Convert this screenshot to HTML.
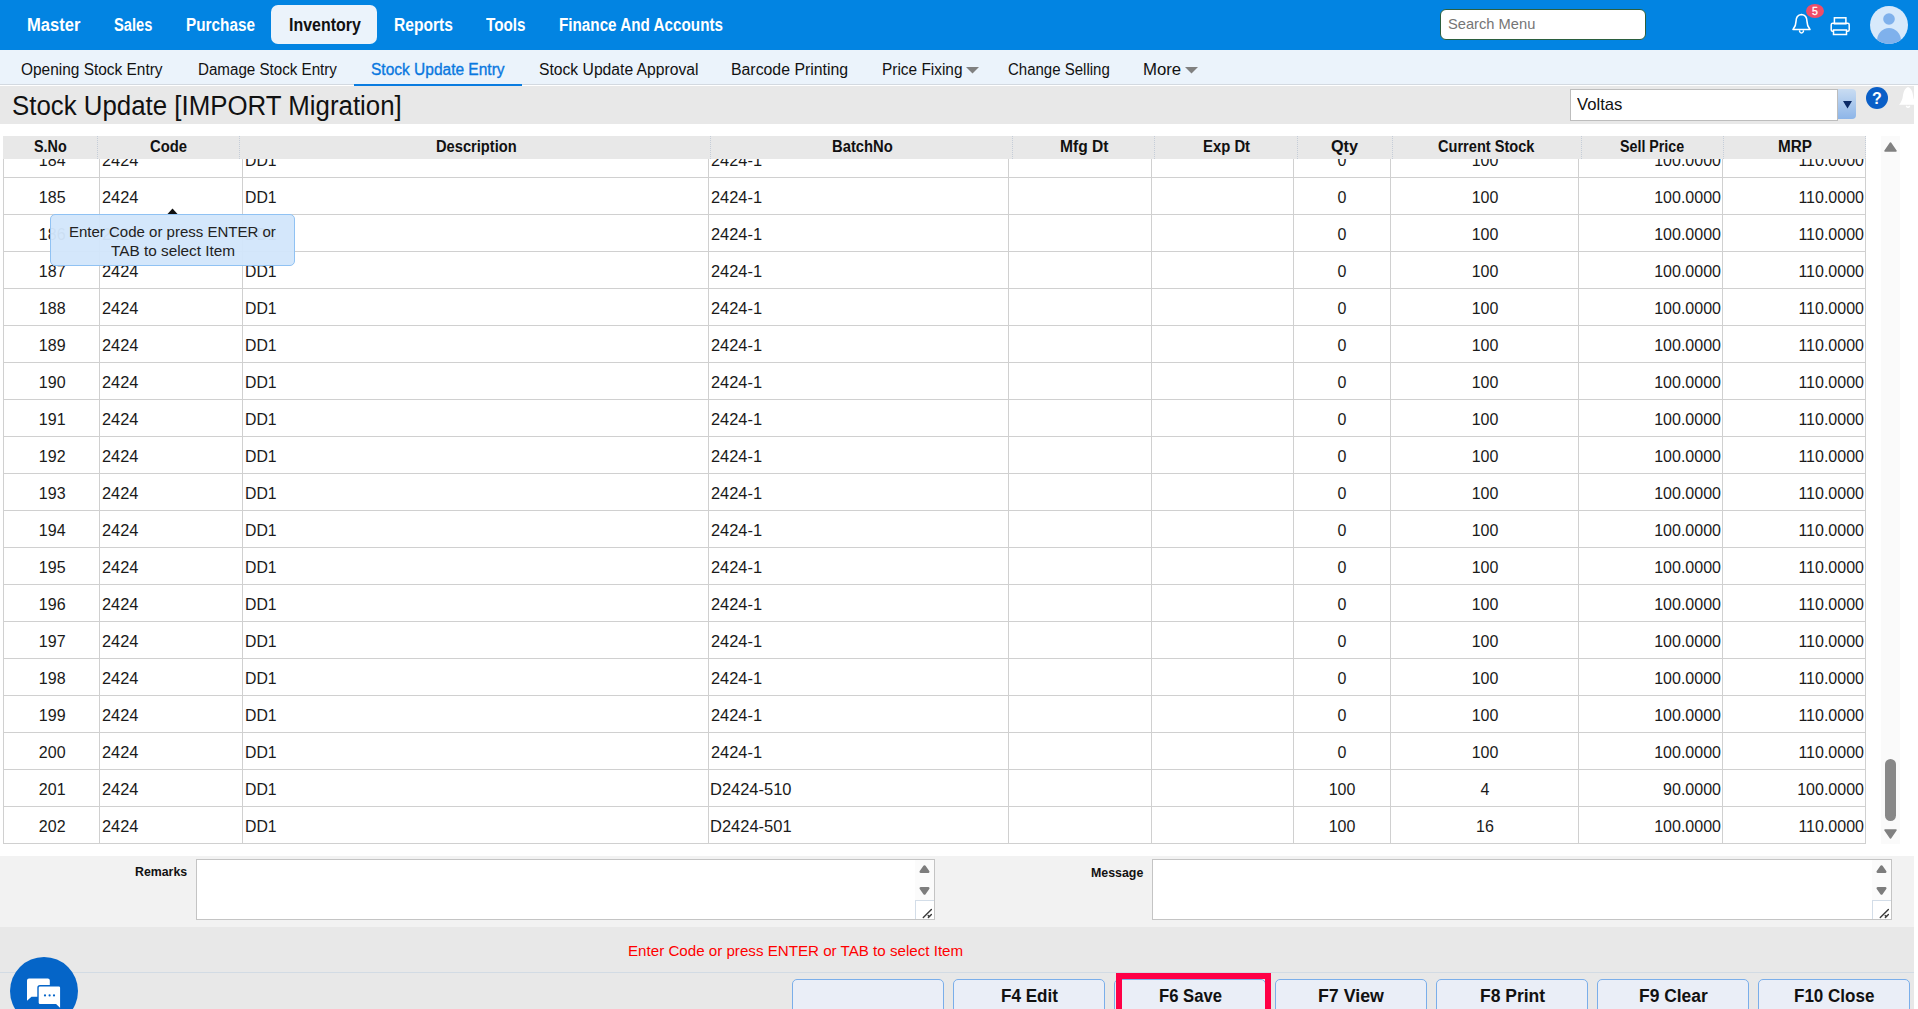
<!DOCTYPE html><html><head><meta charset="utf-8"><style>
*{box-sizing:border-box;margin:0;padding:0}
html,body{width:1918px;height:1009px;overflow:hidden;background:#fff;font-family:"Liberation Sans",sans-serif}
.t{position:absolute;white-space:nowrap;line-height:1;transform-origin:0 50%}
.a{position:absolute}
</style></head><body><div class="a" style="left:0;top:0;width:1918px;height:50px;background:#0284e2"></div>
<div class="a" style="left:271px;top:5px;width:106px;height:39px;background:#ebf3fb;border-radius:7px"></div>
<div class="t" style="left:27.46px;top:16.06px;font-size:18px;font-weight:bold;color:#fff;transform:scaleX(0.9202);">Master</div>
<div class="t" style="left:114.15px;top:16.06px;font-size:18px;font-weight:bold;color:#fff;transform:scaleX(0.8162);">Sales</div>
<div class="t" style="left:186.27px;top:16.06px;font-size:18px;font-weight:bold;color:#fff;transform:scaleX(0.8514);">Purchase</div>
<div class="t" style="left:288.86px;top:16.06px;font-size:18px;font-weight:bold;color:#111;transform:scaleX(0.8858);">Inventory</div>
<div class="t" style="left:394.46px;top:16.06px;font-size:18px;font-weight:bold;color:#fff;transform:scaleX(0.8674);">Reports</div>
<div class="t" style="left:485.97px;top:16.06px;font-size:18px;font-weight:bold;color:#fff;transform:scaleX(0.8485);">Tools</div>
<div class="t" style="left:559.07px;top:16.06px;font-size:18px;font-weight:bold;color:#fff;transform:scaleX(0.8468);">Finance And Accounts</div>
<div class="a" style="left:1440px;top:9px;width:206px;height:31px;background:#fff;border:1px solid #2b5f3e;border-radius:6px"></div>
<div class="t" style="left:1447.62px;top:16.30px;font-size:15px;font-weight:normal;color:#757575;transform:scaleX(0.9788);">Search Menu</div>
<svg class="a" style="left:1788px;top:10px" width="28" height="28" viewBox="0 0 28 28">
<path d="M5 19.5 Q8 16 8 11.5 Q8 5 13.5 4.5 Q19 5 19 11.5 Q19 16 22 19.5 Z" fill="none" stroke="#fff" stroke-width="1.6" stroke-linejoin="round"/>
<path d="M11.6 20.3 L11.6 21.6 Q13.5 24.3 15.4 21.6 L15.4 20.3" fill="none" stroke="#fff" stroke-width="1.4"/>
</svg>
<div class="a" style="left:1806px;top:4px;width:18px;height:14px;border-radius:50%;background:#ef4d68"></div>
<div class="t" style="left:1812.08px;top:6.41px;font-size:10.5px;font-weight:normal;color:#fff;-webkit-text-stroke:0.3px #fff;">5</div>
<svg class="a" style="left:1830px;top:16px" width="21" height="20" viewBox="0 0 21 20">
<rect x="4.4" y="1.8" width="11.5" height="6" fill="none" stroke="#fff" stroke-width="1.5"/>
<rect x="1.2" y="7.2" width="18" height="8" rx="1.5" fill="none" stroke="#fff" stroke-width="1.5"/>
<rect x="3.5" y="14" width="13" height="4.5" fill="#0284e2" stroke="#fff" stroke-width="1.5"/>
</svg>
<svg class="a" style="left:1870px;top:6px" width="38" height="38" viewBox="0 0 38 38">
<defs><clipPath id="av"><circle cx="19" cy="19" r="19"/></clipPath></defs>
<circle cx="19" cy="19" r="19" fill="#d7e9fb"/>
<g clip-path="url(#av)"><circle cx="19" cy="13" r="5.8" fill="#7fb1ec"/>
<ellipse cx="19" cy="35" rx="12" ry="13" fill="#7fb1ec"/></g>
</svg>
<div class="a" style="left:0;top:50px;width:1918px;height:35px;background:#ebf3fb;border-bottom:1px solid #d3d9e0"></div>
<div class="t" style="left:21.41px;top:61.76px;font-size:16px;font-weight:normal;color:#111;transform:scaleX(0.9648);">Opening Stock Entry</div>
<div class="t" style="left:197.85px;top:61.76px;font-size:16px;font-weight:normal;color:#111;transform:scaleX(0.9468);">Damage Stock Entry</div>
<div class="t" style="left:371.21px;top:61.76px;font-size:16px;font-weight:normal;color:#0a78df;transform:scaleX(0.9689);-webkit-text-stroke:0.35px #0a78df;">Stock Update Entry</div>
<div class="t" style="left:538.71px;top:61.76px;font-size:16px;font-weight:normal;color:#111;transform:scaleX(0.9799);">Stock Update Approval</div>
<div class="t" style="left:731.35px;top:61.76px;font-size:16px;font-weight:normal;color:#111;transform:scaleX(0.9898);">Barcode Printing</div>
<div class="t" style="left:881.85px;top:61.76px;font-size:16px;font-weight:normal;color:#111;transform:scaleX(0.9630);">Price Fixing</div>
<div class="t" style="left:1008.21px;top:61.76px;font-size:16px;font-weight:normal;color:#111;transform:scaleX(0.9376);">Change Selling</div>
<div class="t" style="left:1142.84px;top:61.76px;font-size:16px;font-weight:normal;color:#111;transform:scaleX(1.0479);">More</div>
<div class="a" style="left:354px;top:84px;width:168px;height:2px;background:#0a7ce0"></div>
<svg class="a" style="left:966px;top:67px" width="13" height="7" viewBox="0 0 13 7"><path d="M0 0 L13 0 L6.5 6.5 Z" fill="#808080"/></svg>
<svg class="a" style="left:1185px;top:67px" width="13" height="7" viewBox="0 0 13 7"><path d="M0 0 L13 0 L6.5 6.5 Z" fill="#808080"/></svg>
<div class="a" style="left:0;top:86px;width:1914px;height:38px;background:#e8e8e8"></div>
<div class="t" style="left:11.65px;top:93.14px;font-size:27px;font-weight:normal;color:#111;transform:scaleX(0.9573);">Stock Update [IMPORT Migration]</div>
<div class="a" style="left:1570px;top:89px;width:268px;height:32px;background:#fff;border:1px solid #bdbdbd"></div>
<div class="t" style="left:1576.78px;top:95.61px;font-size:17px;font-weight:normal;color:#111;transform:scaleX(0.9796);">Voltas</div>
<div class="a" style="left:1838px;top:89px;width:18px;height:30px;background:linear-gradient(#c9dcf2,#8db5e8);border-radius:0 4px 4px 0"></div>
<svg class="a" style="left:1842.5px;top:101px" width="9" height="8" viewBox="0 0 9 8"><path d="M0 0 L9 0 L4.5 7.5 Z" fill="#0b2a66"/></svg>
<div class="a" style="left:1866px;top:87px;width:22px;height:22px;border-radius:50%;background:#0a5fc7"></div>
<div class="t" style="left:1872.11px;top:90.96px;font-size:16px;font-weight:bold;color:#fff;">?</div>
<svg class="a" style="left:1896px;top:85px" width="22" height="25" viewBox="0 0 22 25">
<path d="M3 19.8 Q6.5 16 7 10 Q8 3.5 12 2 Q16 3.5 17 10 Q17.5 16 21 19.8 Z" fill="#fff"/><path d="M10.2 21 Q12 23.5 13.8 21" fill="none" stroke="#fff" stroke-width="1.3"/></svg>
<div class="a" style="left:0;top:159px;width:1918px;height:685px;overflow:hidden">
<div class="t" style="left:38.84px;top:-5.54px;font-size:16px;font-weight:normal;color:#1a1a1a;">184</div><div class="t" style="left:101.90px;top:-5.54px;font-size:16px;font-weight:normal;color:#1a1a1a;transform:scaleX(1.0240);">2424</div><div class="t" style="left:245.25px;top:-5.54px;font-size:16px;font-weight:normal;color:#1a1a1a;transform:scaleX(0.9873);">DD1</div><div class="t" style="left:710.50px;top:-5.54px;font-size:16px;font-weight:normal;color:#1a1a1a;transform:scaleX(1.0244);">2424-1</div><div class="t" style="left:1337.55px;top:-5.54px;font-size:16px;font-weight:normal;color:#1a1a1a;">0</div><div class="t" style="left:1471.64px;top:-5.54px;font-size:16px;font-weight:normal;color:#1a1a1a;">100</div><div class="t" style="left:1654.20px;top:-5.54px;font-size:16px;font-weight:normal;color:#1a1a1a;">100.0000</div><div class="t" style="left:1798.39px;top:-5.54px;font-size:16px;font-weight:normal;color:#1a1a1a;">110.0000</div><div class="t" style="left:38.84px;top:31.46px;font-size:16px;font-weight:normal;color:#1a1a1a;">185</div><div class="t" style="left:101.90px;top:31.46px;font-size:16px;font-weight:normal;color:#1a1a1a;transform:scaleX(1.0240);">2424</div><div class="t" style="left:245.25px;top:31.46px;font-size:16px;font-weight:normal;color:#1a1a1a;transform:scaleX(0.9873);">DD1</div><div class="t" style="left:710.50px;top:31.46px;font-size:16px;font-weight:normal;color:#1a1a1a;transform:scaleX(1.0244);">2424-1</div><div class="t" style="left:1337.55px;top:31.46px;font-size:16px;font-weight:normal;color:#1a1a1a;">0</div><div class="t" style="left:1471.64px;top:31.46px;font-size:16px;font-weight:normal;color:#1a1a1a;">100</div><div class="t" style="left:1654.20px;top:31.46px;font-size:16px;font-weight:normal;color:#1a1a1a;">100.0000</div><div class="t" style="left:1798.39px;top:31.46px;font-size:16px;font-weight:normal;color:#1a1a1a;">110.0000</div><div class="t" style="left:38.84px;top:68.46px;font-size:16px;font-weight:normal;color:#1a1a1a;">186</div><div class="t" style="left:101.90px;top:68.46px;font-size:16px;font-weight:normal;color:#1a1a1a;transform:scaleX(1.0240);">2424</div><div class="t" style="left:245.25px;top:68.46px;font-size:16px;font-weight:normal;color:#1a1a1a;transform:scaleX(0.9873);">DD1</div><div class="t" style="left:710.50px;top:68.46px;font-size:16px;font-weight:normal;color:#1a1a1a;transform:scaleX(1.0244);">2424-1</div><div class="t" style="left:1337.55px;top:68.46px;font-size:16px;font-weight:normal;color:#1a1a1a;">0</div><div class="t" style="left:1471.64px;top:68.46px;font-size:16px;font-weight:normal;color:#1a1a1a;">100</div><div class="t" style="left:1654.20px;top:68.46px;font-size:16px;font-weight:normal;color:#1a1a1a;">100.0000</div><div class="t" style="left:1798.39px;top:68.46px;font-size:16px;font-weight:normal;color:#1a1a1a;">110.0000</div><div class="t" style="left:38.84px;top:105.46px;font-size:16px;font-weight:normal;color:#1a1a1a;">187</div><div class="t" style="left:101.90px;top:105.46px;font-size:16px;font-weight:normal;color:#1a1a1a;transform:scaleX(1.0240);">2424</div><div class="t" style="left:245.25px;top:105.46px;font-size:16px;font-weight:normal;color:#1a1a1a;transform:scaleX(0.9873);">DD1</div><div class="t" style="left:710.50px;top:105.46px;font-size:16px;font-weight:normal;color:#1a1a1a;transform:scaleX(1.0244);">2424-1</div><div class="t" style="left:1337.55px;top:105.46px;font-size:16px;font-weight:normal;color:#1a1a1a;">0</div><div class="t" style="left:1471.64px;top:105.46px;font-size:16px;font-weight:normal;color:#1a1a1a;">100</div><div class="t" style="left:1654.20px;top:105.46px;font-size:16px;font-weight:normal;color:#1a1a1a;">100.0000</div><div class="t" style="left:1798.39px;top:105.46px;font-size:16px;font-weight:normal;color:#1a1a1a;">110.0000</div><div class="t" style="left:38.84px;top:142.46px;font-size:16px;font-weight:normal;color:#1a1a1a;">188</div><div class="t" style="left:101.90px;top:142.46px;font-size:16px;font-weight:normal;color:#1a1a1a;transform:scaleX(1.0240);">2424</div><div class="t" style="left:245.25px;top:142.46px;font-size:16px;font-weight:normal;color:#1a1a1a;transform:scaleX(0.9873);">DD1</div><div class="t" style="left:710.50px;top:142.46px;font-size:16px;font-weight:normal;color:#1a1a1a;transform:scaleX(1.0244);">2424-1</div><div class="t" style="left:1337.55px;top:142.46px;font-size:16px;font-weight:normal;color:#1a1a1a;">0</div><div class="t" style="left:1471.64px;top:142.46px;font-size:16px;font-weight:normal;color:#1a1a1a;">100</div><div class="t" style="left:1654.20px;top:142.46px;font-size:16px;font-weight:normal;color:#1a1a1a;">100.0000</div><div class="t" style="left:1798.39px;top:142.46px;font-size:16px;font-weight:normal;color:#1a1a1a;">110.0000</div><div class="t" style="left:38.84px;top:179.46px;font-size:16px;font-weight:normal;color:#1a1a1a;">189</div><div class="t" style="left:101.90px;top:179.46px;font-size:16px;font-weight:normal;color:#1a1a1a;transform:scaleX(1.0240);">2424</div><div class="t" style="left:245.25px;top:179.46px;font-size:16px;font-weight:normal;color:#1a1a1a;transform:scaleX(0.9873);">DD1</div><div class="t" style="left:710.50px;top:179.46px;font-size:16px;font-weight:normal;color:#1a1a1a;transform:scaleX(1.0244);">2424-1</div><div class="t" style="left:1337.55px;top:179.46px;font-size:16px;font-weight:normal;color:#1a1a1a;">0</div><div class="t" style="left:1471.64px;top:179.46px;font-size:16px;font-weight:normal;color:#1a1a1a;">100</div><div class="t" style="left:1654.20px;top:179.46px;font-size:16px;font-weight:normal;color:#1a1a1a;">100.0000</div><div class="t" style="left:1798.39px;top:179.46px;font-size:16px;font-weight:normal;color:#1a1a1a;">110.0000</div><div class="t" style="left:38.84px;top:216.46px;font-size:16px;font-weight:normal;color:#1a1a1a;">190</div><div class="t" style="left:101.90px;top:216.46px;font-size:16px;font-weight:normal;color:#1a1a1a;transform:scaleX(1.0240);">2424</div><div class="t" style="left:245.25px;top:216.46px;font-size:16px;font-weight:normal;color:#1a1a1a;transform:scaleX(0.9873);">DD1</div><div class="t" style="left:710.50px;top:216.46px;font-size:16px;font-weight:normal;color:#1a1a1a;transform:scaleX(1.0244);">2424-1</div><div class="t" style="left:1337.55px;top:216.46px;font-size:16px;font-weight:normal;color:#1a1a1a;">0</div><div class="t" style="left:1471.64px;top:216.46px;font-size:16px;font-weight:normal;color:#1a1a1a;">100</div><div class="t" style="left:1654.20px;top:216.46px;font-size:16px;font-weight:normal;color:#1a1a1a;">100.0000</div><div class="t" style="left:1798.39px;top:216.46px;font-size:16px;font-weight:normal;color:#1a1a1a;">110.0000</div><div class="t" style="left:38.84px;top:253.46px;font-size:16px;font-weight:normal;color:#1a1a1a;">191</div><div class="t" style="left:101.90px;top:253.46px;font-size:16px;font-weight:normal;color:#1a1a1a;transform:scaleX(1.0240);">2424</div><div class="t" style="left:245.25px;top:253.46px;font-size:16px;font-weight:normal;color:#1a1a1a;transform:scaleX(0.9873);">DD1</div><div class="t" style="left:710.50px;top:253.46px;font-size:16px;font-weight:normal;color:#1a1a1a;transform:scaleX(1.0244);">2424-1</div><div class="t" style="left:1337.55px;top:253.46px;font-size:16px;font-weight:normal;color:#1a1a1a;">0</div><div class="t" style="left:1471.64px;top:253.46px;font-size:16px;font-weight:normal;color:#1a1a1a;">100</div><div class="t" style="left:1654.20px;top:253.46px;font-size:16px;font-weight:normal;color:#1a1a1a;">100.0000</div><div class="t" style="left:1798.39px;top:253.46px;font-size:16px;font-weight:normal;color:#1a1a1a;">110.0000</div><div class="t" style="left:38.84px;top:290.46px;font-size:16px;font-weight:normal;color:#1a1a1a;">192</div><div class="t" style="left:101.90px;top:290.46px;font-size:16px;font-weight:normal;color:#1a1a1a;transform:scaleX(1.0240);">2424</div><div class="t" style="left:245.25px;top:290.46px;font-size:16px;font-weight:normal;color:#1a1a1a;transform:scaleX(0.9873);">DD1</div><div class="t" style="left:710.50px;top:290.46px;font-size:16px;font-weight:normal;color:#1a1a1a;transform:scaleX(1.0244);">2424-1</div><div class="t" style="left:1337.55px;top:290.46px;font-size:16px;font-weight:normal;color:#1a1a1a;">0</div><div class="t" style="left:1471.64px;top:290.46px;font-size:16px;font-weight:normal;color:#1a1a1a;">100</div><div class="t" style="left:1654.20px;top:290.46px;font-size:16px;font-weight:normal;color:#1a1a1a;">100.0000</div><div class="t" style="left:1798.39px;top:290.46px;font-size:16px;font-weight:normal;color:#1a1a1a;">110.0000</div><div class="t" style="left:38.84px;top:327.46px;font-size:16px;font-weight:normal;color:#1a1a1a;">193</div><div class="t" style="left:101.90px;top:327.46px;font-size:16px;font-weight:normal;color:#1a1a1a;transform:scaleX(1.0240);">2424</div><div class="t" style="left:245.25px;top:327.46px;font-size:16px;font-weight:normal;color:#1a1a1a;transform:scaleX(0.9873);">DD1</div><div class="t" style="left:710.50px;top:327.46px;font-size:16px;font-weight:normal;color:#1a1a1a;transform:scaleX(1.0244);">2424-1</div><div class="t" style="left:1337.55px;top:327.46px;font-size:16px;font-weight:normal;color:#1a1a1a;">0</div><div class="t" style="left:1471.64px;top:327.46px;font-size:16px;font-weight:normal;color:#1a1a1a;">100</div><div class="t" style="left:1654.20px;top:327.46px;font-size:16px;font-weight:normal;color:#1a1a1a;">100.0000</div><div class="t" style="left:1798.39px;top:327.46px;font-size:16px;font-weight:normal;color:#1a1a1a;">110.0000</div><div class="t" style="left:38.84px;top:364.46px;font-size:16px;font-weight:normal;color:#1a1a1a;">194</div><div class="t" style="left:101.90px;top:364.46px;font-size:16px;font-weight:normal;color:#1a1a1a;transform:scaleX(1.0240);">2424</div><div class="t" style="left:245.25px;top:364.46px;font-size:16px;font-weight:normal;color:#1a1a1a;transform:scaleX(0.9873);">DD1</div><div class="t" style="left:710.50px;top:364.46px;font-size:16px;font-weight:normal;color:#1a1a1a;transform:scaleX(1.0244);">2424-1</div><div class="t" style="left:1337.55px;top:364.46px;font-size:16px;font-weight:normal;color:#1a1a1a;">0</div><div class="t" style="left:1471.64px;top:364.46px;font-size:16px;font-weight:normal;color:#1a1a1a;">100</div><div class="t" style="left:1654.20px;top:364.46px;font-size:16px;font-weight:normal;color:#1a1a1a;">100.0000</div><div class="t" style="left:1798.39px;top:364.46px;font-size:16px;font-weight:normal;color:#1a1a1a;">110.0000</div><div class="t" style="left:38.84px;top:401.46px;font-size:16px;font-weight:normal;color:#1a1a1a;">195</div><div class="t" style="left:101.90px;top:401.46px;font-size:16px;font-weight:normal;color:#1a1a1a;transform:scaleX(1.0240);">2424</div><div class="t" style="left:245.25px;top:401.46px;font-size:16px;font-weight:normal;color:#1a1a1a;transform:scaleX(0.9873);">DD1</div><div class="t" style="left:710.50px;top:401.46px;font-size:16px;font-weight:normal;color:#1a1a1a;transform:scaleX(1.0244);">2424-1</div><div class="t" style="left:1337.55px;top:401.46px;font-size:16px;font-weight:normal;color:#1a1a1a;">0</div><div class="t" style="left:1471.64px;top:401.46px;font-size:16px;font-weight:normal;color:#1a1a1a;">100</div><div class="t" style="left:1654.20px;top:401.46px;font-size:16px;font-weight:normal;color:#1a1a1a;">100.0000</div><div class="t" style="left:1798.39px;top:401.46px;font-size:16px;font-weight:normal;color:#1a1a1a;">110.0000</div><div class="t" style="left:38.84px;top:438.46px;font-size:16px;font-weight:normal;color:#1a1a1a;">196</div><div class="t" style="left:101.90px;top:438.46px;font-size:16px;font-weight:normal;color:#1a1a1a;transform:scaleX(1.0240);">2424</div><div class="t" style="left:245.25px;top:438.46px;font-size:16px;font-weight:normal;color:#1a1a1a;transform:scaleX(0.9873);">DD1</div><div class="t" style="left:710.50px;top:438.46px;font-size:16px;font-weight:normal;color:#1a1a1a;transform:scaleX(1.0244);">2424-1</div><div class="t" style="left:1337.55px;top:438.46px;font-size:16px;font-weight:normal;color:#1a1a1a;">0</div><div class="t" style="left:1471.64px;top:438.46px;font-size:16px;font-weight:normal;color:#1a1a1a;">100</div><div class="t" style="left:1654.20px;top:438.46px;font-size:16px;font-weight:normal;color:#1a1a1a;">100.0000</div><div class="t" style="left:1798.39px;top:438.46px;font-size:16px;font-weight:normal;color:#1a1a1a;">110.0000</div><div class="t" style="left:38.84px;top:475.46px;font-size:16px;font-weight:normal;color:#1a1a1a;">197</div><div class="t" style="left:101.90px;top:475.46px;font-size:16px;font-weight:normal;color:#1a1a1a;transform:scaleX(1.0240);">2424</div><div class="t" style="left:245.25px;top:475.46px;font-size:16px;font-weight:normal;color:#1a1a1a;transform:scaleX(0.9873);">DD1</div><div class="t" style="left:710.50px;top:475.46px;font-size:16px;font-weight:normal;color:#1a1a1a;transform:scaleX(1.0244);">2424-1</div><div class="t" style="left:1337.55px;top:475.46px;font-size:16px;font-weight:normal;color:#1a1a1a;">0</div><div class="t" style="left:1471.64px;top:475.46px;font-size:16px;font-weight:normal;color:#1a1a1a;">100</div><div class="t" style="left:1654.20px;top:475.46px;font-size:16px;font-weight:normal;color:#1a1a1a;">100.0000</div><div class="t" style="left:1798.39px;top:475.46px;font-size:16px;font-weight:normal;color:#1a1a1a;">110.0000</div><div class="t" style="left:38.84px;top:512.46px;font-size:16px;font-weight:normal;color:#1a1a1a;">198</div><div class="t" style="left:101.90px;top:512.46px;font-size:16px;font-weight:normal;color:#1a1a1a;transform:scaleX(1.0240);">2424</div><div class="t" style="left:245.25px;top:512.46px;font-size:16px;font-weight:normal;color:#1a1a1a;transform:scaleX(0.9873);">DD1</div><div class="t" style="left:710.50px;top:512.46px;font-size:16px;font-weight:normal;color:#1a1a1a;transform:scaleX(1.0244);">2424-1</div><div class="t" style="left:1337.55px;top:512.46px;font-size:16px;font-weight:normal;color:#1a1a1a;">0</div><div class="t" style="left:1471.64px;top:512.46px;font-size:16px;font-weight:normal;color:#1a1a1a;">100</div><div class="t" style="left:1654.20px;top:512.46px;font-size:16px;font-weight:normal;color:#1a1a1a;">100.0000</div><div class="t" style="left:1798.39px;top:512.46px;font-size:16px;font-weight:normal;color:#1a1a1a;">110.0000</div><div class="t" style="left:38.84px;top:549.46px;font-size:16px;font-weight:normal;color:#1a1a1a;">199</div><div class="t" style="left:101.90px;top:549.46px;font-size:16px;font-weight:normal;color:#1a1a1a;transform:scaleX(1.0240);">2424</div><div class="t" style="left:245.25px;top:549.46px;font-size:16px;font-weight:normal;color:#1a1a1a;transform:scaleX(0.9873);">DD1</div><div class="t" style="left:710.50px;top:549.46px;font-size:16px;font-weight:normal;color:#1a1a1a;transform:scaleX(1.0244);">2424-1</div><div class="t" style="left:1337.55px;top:549.46px;font-size:16px;font-weight:normal;color:#1a1a1a;">0</div><div class="t" style="left:1471.64px;top:549.46px;font-size:16px;font-weight:normal;color:#1a1a1a;">100</div><div class="t" style="left:1654.20px;top:549.46px;font-size:16px;font-weight:normal;color:#1a1a1a;">100.0000</div><div class="t" style="left:1798.39px;top:549.46px;font-size:16px;font-weight:normal;color:#1a1a1a;">110.0000</div><div class="t" style="left:38.84px;top:586.46px;font-size:16px;font-weight:normal;color:#1a1a1a;">200</div><div class="t" style="left:101.90px;top:586.46px;font-size:16px;font-weight:normal;color:#1a1a1a;transform:scaleX(1.0240);">2424</div><div class="t" style="left:245.25px;top:586.46px;font-size:16px;font-weight:normal;color:#1a1a1a;transform:scaleX(0.9873);">DD1</div><div class="t" style="left:710.50px;top:586.46px;font-size:16px;font-weight:normal;color:#1a1a1a;transform:scaleX(1.0244);">2424-1</div><div class="t" style="left:1337.55px;top:586.46px;font-size:16px;font-weight:normal;color:#1a1a1a;">0</div><div class="t" style="left:1471.64px;top:586.46px;font-size:16px;font-weight:normal;color:#1a1a1a;">100</div><div class="t" style="left:1654.20px;top:586.46px;font-size:16px;font-weight:normal;color:#1a1a1a;">100.0000</div><div class="t" style="left:1798.39px;top:586.46px;font-size:16px;font-weight:normal;color:#1a1a1a;">110.0000</div><div class="t" style="left:38.84px;top:623.46px;font-size:16px;font-weight:normal;color:#1a1a1a;">201</div><div class="t" style="left:101.90px;top:623.46px;font-size:16px;font-weight:normal;color:#1a1a1a;transform:scaleX(1.0240);">2424</div><div class="t" style="left:245.25px;top:623.46px;font-size:16px;font-weight:normal;color:#1a1a1a;transform:scaleX(0.9873);">DD1</div><div class="t" style="left:710.44px;top:623.46px;font-size:16px;font-weight:normal;color:#1a1a1a;transform:scaleX(1.0288);">D2424-510</div><div class="t" style="left:1328.64px;top:623.46px;font-size:16px;font-weight:normal;color:#1a1a1a;">100</div><div class="t" style="left:1480.55px;top:623.46px;font-size:16px;font-weight:normal;color:#1a1a1a;">4</div><div class="t" style="left:1663.11px;top:623.46px;font-size:16px;font-weight:normal;color:#1a1a1a;">90.0000</div><div class="t" style="left:1797.20px;top:623.46px;font-size:16px;font-weight:normal;color:#1a1a1a;">100.0000</div><div class="t" style="left:38.84px;top:660.46px;font-size:16px;font-weight:normal;color:#1a1a1a;">202</div><div class="t" style="left:101.90px;top:660.46px;font-size:16px;font-weight:normal;color:#1a1a1a;transform:scaleX(1.0240);">2424</div><div class="t" style="left:245.25px;top:660.46px;font-size:16px;font-weight:normal;color:#1a1a1a;transform:scaleX(0.9873);">DD1</div><div class="t" style="left:710.44px;top:660.46px;font-size:16px;font-weight:normal;color:#1a1a1a;transform:scaleX(1.0304);">D2424-501</div><div class="t" style="left:1328.64px;top:660.46px;font-size:16px;font-weight:normal;color:#1a1a1a;">100</div><div class="t" style="left:1476.09px;top:660.46px;font-size:16px;font-weight:normal;color:#1a1a1a;">16</div><div class="t" style="left:1654.20px;top:660.46px;font-size:16px;font-weight:normal;color:#1a1a1a;">100.0000</div><div class="t" style="left:1798.39px;top:660.46px;font-size:16px;font-weight:normal;color:#1a1a1a;">110.0000</div><div class="a" style="left:3px;top:18px;width:1863px;height:1px;background:#d0d0d0"></div><div class="a" style="left:3px;top:55px;width:1863px;height:1px;background:#d0d0d0"></div><div class="a" style="left:3px;top:92px;width:1863px;height:1px;background:#d0d0d0"></div><div class="a" style="left:3px;top:129px;width:1863px;height:1px;background:#d0d0d0"></div><div class="a" style="left:3px;top:166px;width:1863px;height:1px;background:#d0d0d0"></div><div class="a" style="left:3px;top:203px;width:1863px;height:1px;background:#d0d0d0"></div><div class="a" style="left:3px;top:240px;width:1863px;height:1px;background:#d0d0d0"></div><div class="a" style="left:3px;top:277px;width:1863px;height:1px;background:#d0d0d0"></div><div class="a" style="left:3px;top:314px;width:1863px;height:1px;background:#d0d0d0"></div><div class="a" style="left:3px;top:351px;width:1863px;height:1px;background:#d0d0d0"></div><div class="a" style="left:3px;top:388px;width:1863px;height:1px;background:#d0d0d0"></div><div class="a" style="left:3px;top:425px;width:1863px;height:1px;background:#d0d0d0"></div><div class="a" style="left:3px;top:462px;width:1863px;height:1px;background:#d0d0d0"></div><div class="a" style="left:3px;top:499px;width:1863px;height:1px;background:#d0d0d0"></div><div class="a" style="left:3px;top:536px;width:1863px;height:1px;background:#d0d0d0"></div><div class="a" style="left:3px;top:573px;width:1863px;height:1px;background:#d0d0d0"></div><div class="a" style="left:3px;top:610px;width:1863px;height:1px;background:#d0d0d0"></div><div class="a" style="left:3px;top:647px;width:1863px;height:1px;background:#d0d0d0"></div><div class="a" style="left:3px;top:684px;width:1863px;height:1px;background:#d0d0d0"></div><div class="a" style="left:3px;top:0;width:1px;height:685px;background:#d0d0d0"></div><div class="a" style="left:99px;top:0;width:1px;height:685px;background:#d0d0d0"></div><div class="a" style="left:242px;top:0;width:1px;height:685px;background:#d0d0d0"></div><div class="a" style="left:708px;top:0;width:1px;height:685px;background:#d0d0d0"></div><div class="a" style="left:1008px;top:0;width:1px;height:685px;background:#d0d0d0"></div><div class="a" style="left:1151px;top:0;width:1px;height:685px;background:#d0d0d0"></div><div class="a" style="left:1293px;top:0;width:1px;height:685px;background:#d0d0d0"></div><div class="a" style="left:1390px;top:0;width:1px;height:685px;background:#d0d0d0"></div><div class="a" style="left:1578px;top:0;width:1px;height:685px;background:#d0d0d0"></div><div class="a" style="left:1722px;top:0;width:1px;height:685px;background:#d0d0d0"></div><div class="a" style="left:1865px;top:0;width:1px;height:685px;background:#d0d0d0"></div>
</div>
<div class="a" style="left:3px;top:136px;width:1863px;height:23px;background:#e8e8e8"></div>
<div class="a" style="left:97px;top:136px;width:1px;height:23px;border-left:1px dotted #c5cdd8"></div>
<div class="a" style="left:239px;top:136px;width:1px;height:23px;border-left:1px dotted #c5cdd8"></div>
<div class="a" style="left:710px;top:136px;width:1px;height:23px;border-left:1px dotted #c5cdd8"></div>
<div class="a" style="left:1012px;top:136px;width:1px;height:23px;border-left:1px dotted #c5cdd8"></div>
<div class="a" style="left:1154px;top:136px;width:1px;height:23px;border-left:1px dotted #c5cdd8"></div>
<div class="a" style="left:1297px;top:136px;width:1px;height:23px;border-left:1px dotted #c5cdd8"></div>
<div class="a" style="left:1392px;top:136px;width:1px;height:23px;border-left:1px dotted #c5cdd8"></div>
<div class="a" style="left:1581px;top:136px;width:1px;height:23px;border-left:1px dotted #c5cdd8"></div>
<div class="a" style="left:1723px;top:136px;width:1px;height:23px;border-left:1px dotted #c5cdd8"></div>
<div class="a" style="left:1865px;top:136px;width:1px;height:23px;border-left:1px dotted #c5cdd8"></div>
<div class="t" style="left:34.14px;top:139.46px;font-size:16px;font-weight:bold;color:#111;transform:scaleX(0.8967);">S.No</div>
<div class="t" style="left:150.13px;top:139.46px;font-size:16px;font-weight:bold;color:#111;transform:scaleX(0.9259);">Code</div>
<div class="t" style="left:435.79px;top:139.46px;font-size:16px;font-weight:bold;color:#111;transform:scaleX(0.9163);">Description</div>
<div class="t" style="left:832.08px;top:139.46px;font-size:16px;font-weight:bold;color:#111;transform:scaleX(0.9246);">BatchNo</div>
<div class="t" style="left:1059.98px;top:139.46px;font-size:16px;font-weight:bold;color:#111;transform:scaleX(0.9722);">Mfg Dt</div>
<div class="t" style="left:1202.58px;top:139.46px;font-size:16px;font-weight:bold;color:#111;transform:scaleX(0.9290);">Exp Dt</div>
<div class="t" style="left:1331.02px;top:139.46px;font-size:16px;font-weight:bold;color:#111;transform:scaleX(1.0143);">Qty</div>
<div class="t" style="left:1438.33px;top:139.46px;font-size:16px;font-weight:bold;color:#111;transform:scaleX(0.9113);">Current Stock</div>
<div class="t" style="left:1620.14px;top:139.46px;font-size:16px;font-weight:bold;color:#111;transform:scaleX(0.8903);">Sell Price</div>
<div class="t" style="left:1777.58px;top:139.46px;font-size:16px;font-weight:bold;color:#111;transform:scaleX(0.9548);">MRP</div>
<div class="a" style="left:1881px;top:136px;width:19px;height:708px;background:#fafafa"></div>
<svg class="a" style="left:1884px;top:142px" width="13" height="10" viewBox="0 0 13 10"><path d="M6.5 1 L12 9 L1 9 Z" fill="#808080" stroke="#808080" stroke-width="1.5" stroke-linejoin="round"/></svg>
<svg class="a" style="left:1884px;top:829px" width="13" height="10" viewBox="0 0 13 10"><path d="M1 1 L12 1 L6.5 9 Z" fill="#808080" stroke="#808080" stroke-width="1.5" stroke-linejoin="round"/></svg>
<div class="a" style="left:1885px;top:759px;width:11px;height:62px;background:#888;border-radius:6px"></div>
<div class="a" style="left:50px;top:214px;width:245px;height:52px;background:rgba(210,230,251,0.96);border:1px solid #90c2f3;border-radius:5px"></div>
<svg class="a" style="left:167px;top:208px" width="11" height="7" viewBox="0 0 11 7"><path d="M5.5 0.5 L10.5 6 L0.5 6 Z" fill="#111"/></svg>
<div class="t" style="left:69.44px;top:224.30px;font-size:15px;font-weight:normal;color:#222;transform:scaleX(1.0003);">Enter Code or press ENTER or</div>
<div class="t" style="left:110.95px;top:242.90px;font-size:15px;font-weight:normal;color:#222;transform:scaleX(1.0222);">TAB to select Item</div>
<div class="a" style="left:0;top:856px;width:1914px;height:71px;background:#f2f2f2"></div>
<div class="t" style="left:134.90px;top:865.49px;font-size:13.6px;font-weight:bold;color:#111;transform:scaleX(0.9069);">Remarks</div>
<div class="t" style="left:1090.90px;top:865.79px;font-size:13.6px;font-weight:bold;color:#111;transform:scaleX(0.9102);">Message</div>
<div class="a" style="left:196px;top:859px;width:739px;height:61px;background:#fff;border:1px solid #c4c4c4"></div>
<div class="a" style="left:915px;top:860px;width:19px;height:40px;background:#fbfbfb"></div>
<svg class="a" style="left:918px;top:864px" width="13" height="10" viewBox="0 0 13 10"><path d="M6.5 2.6 L10.2 7.8 L2.8 7.8 Z" fill="#7d7d7d" stroke="#7d7d7d" stroke-width="2.6" stroke-linejoin="round"/></svg>
<svg class="a" style="left:918px;top:886px" width="13" height="10" viewBox="0 0 13 10"><path d="M2.8 2.2 L10.2 2.2 L6.5 7.4 Z" fill="#7d7d7d" stroke="#7d7d7d" stroke-width="2.6" stroke-linejoin="round"/></svg>
<div class="a" style="left:915px;top:900px;width:19px;height:19px;background:#fff;border-left:1px solid #d3dde8;border-top:1px solid #d3dde8"></div>
<svg class="a" style="left:921px;top:908px" width="11" height="11" viewBox="0 0 11 11"><path d="M2.3 9.6 L10.4 1.5 M7.4 9.6 L10.4 6.6 M7.2 7.6 L8.6 8.6" stroke="#3a3a3a" stroke-width="1.4" stroke-linecap="round"/></svg>
<div class="a" style="left:1152px;top:859px;width:740px;height:61px;background:#fff;border:1px solid #c4c4c4"></div>
<div class="a" style="left:1872px;top:860px;width:19px;height:40px;background:#fbfbfb"></div>
<svg class="a" style="left:1875px;top:864px" width="13" height="10" viewBox="0 0 13 10"><path d="M6.5 2.6 L10.2 7.8 L2.8 7.8 Z" fill="#7d7d7d" stroke="#7d7d7d" stroke-width="2.6" stroke-linejoin="round"/></svg>
<svg class="a" style="left:1875px;top:886px" width="13" height="10" viewBox="0 0 13 10"><path d="M2.8 2.2 L10.2 2.2 L6.5 7.4 Z" fill="#7d7d7d" stroke="#7d7d7d" stroke-width="2.6" stroke-linejoin="round"/></svg>
<div class="a" style="left:1872px;top:900px;width:19px;height:19px;background:#fff;border-left:1px solid #d3dde8;border-top:1px solid #d3dde8"></div>
<svg class="a" style="left:1878px;top:908px" width="11" height="11" viewBox="0 0 11 11"><path d="M2.3 9.6 L10.4 1.5 M7.4 9.6 L10.4 6.6 M7.2 7.6 L8.6 8.6" stroke="#3a3a3a" stroke-width="1.4" stroke-linecap="round"/></svg>
<div class="a" style="left:0;top:927px;width:1914px;height:82px;background:#e8e8e8"></div>
<div class="t" style="left:628.15px;top:943.18px;font-size:15.5px;font-weight:normal;color:#ff0000;transform:scaleX(0.9767);">Enter Code or press ENTER or TAB to select Item</div>
<div class="a" style="left:0;top:972px;width:1914px;height:1px;background:#d2dbe4"></div>
<div class="a" style="left:792px;top:979px;width:152px;height:40px;background:#eaeef7;border:1.5px solid #7aaeea;border-radius:5px"></div>
<div class="a" style="left:953px;top:979px;width:152px;height:40px;background:#eaeef7;border:1.5px solid #7aaeea;border-radius:5px"></div>
<div class="t" style="left:1000.82px;top:986.96px;font-size:18px;font-weight:bold;color:#111;transform:scaleX(0.9490);">F4 Edit</div>
<div class="a" style="left:1114px;top:979px;width:152px;height:40px;background:#eaeef7;border:1.5px solid #7aaeea;border-radius:5px"></div>
<div class="t" style="left:1158.79px;top:986.96px;font-size:18px;font-weight:bold;color:#111;transform:scaleX(0.9260);">F6 Save</div>
<div class="a" style="left:1275px;top:979px;width:152px;height:40px;background:#eaeef7;border:1.5px solid #7aaeea;border-radius:5px"></div>
<div class="t" style="left:1318.35px;top:986.96px;font-size:18px;font-weight:bold;color:#111;transform:scaleX(0.9880);">F7 View</div>
<div class="a" style="left:1436px;top:979px;width:152px;height:40px;background:#eaeef7;border:1.5px solid #7aaeea;border-radius:5px"></div>
<div class="t" style="left:1479.73px;top:986.96px;font-size:18px;font-weight:bold;color:#111;transform:scaleX(0.9720);">F8 Print</div>
<div class="a" style="left:1597px;top:979px;width:152px;height:40px;background:#eaeef7;border:1.5px solid #7aaeea;border-radius:5px"></div>
<div class="t" style="left:1638.91px;top:986.96px;font-size:18px;font-weight:bold;color:#111;transform:scaleX(0.9680);">F9 Clear</div>
<div class="a" style="left:1758px;top:979px;width:152px;height:40px;background:#eaeef7;border:1.5px solid #7aaeea;border-radius:5px"></div>
<div class="t" style="left:1794.07px;top:986.96px;font-size:18px;font-weight:bold;color:#111;transform:scaleX(0.9460);">F10 Close</div>
<div class="a" style="left:1116px;top:973px;width:155px;height:50px;border:6px solid #ff0046"></div>
<svg class="a" style="left:10px;top:957px" width="68" height="52" viewBox="0 0 68 52">
<circle cx="34" cy="34" r="34" fill="#0565c8"/>
<path d="M17 39.7 L17 23.6 Q17 21.6 19 21.6 L37.8 21.6 Q39.8 21.6 39.8 23.6 L39.8 39.7 L21.5 39.7 L17 43.8 Z" fill="#fff"/>
<path d="M30 28.7 L48.8 28.7 Q50.8 28.7 50.8 30.7 L50.8 52.5 L45.8 47.7 L30 47.7 Q28 47.7 28 45.7 L28 30.7 Q28 28.7 30 28.7 Z" fill="#fff" stroke="#0565c8" stroke-width="1.4"/>
<circle cx="35" cy="38.4" r="1.1" fill="#0565c8"/><circle cx="39.6" cy="38.4" r="1.1" fill="#0565c8"/><circle cx="44" cy="38.4" r="1.1" fill="#0565c8"/>
</svg></body></html>
